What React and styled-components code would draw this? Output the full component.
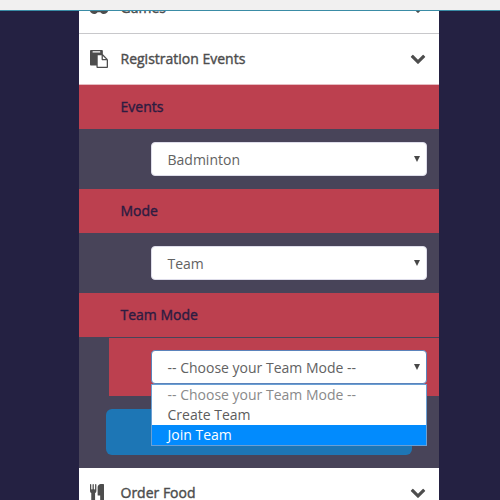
import React from "react";
import styled, { createGlobalStyle } from "styled-components";

const GlobalStyle = createGlobalStyle`
  * { box-sizing: border-box; }
  body {
    margin: 0;
    background: #242142;
    font-family: "Open Sans", "Noto Sans", sans-serif;
    font-size: 14px;
  }
`;

const Page = styled.div`
  height: 500px;
  overflow: hidden;
  display: flex;
  flex-direction: column;
`;

const BrowserEdge = styled.div`
  flex: none;
  height: 11px;
  background: #f1f0f0;
  border-bottom: 1px solid #3a8ca6;
`;

const Accordion = styled.main`
  flex: 1;
  min-height: 0;
  width: 360px;
  margin-left: 79px;
  background: #484459;
  overflow: hidden;
`;

const MenuRow = styled.div`
  display: flex;
  align-items: center;
  height: 51px;
  margin-top: ${(p) => p.$offset || 0}px;
  padding: 0 13px 0 10px;
  background: #fff;
  color: #4d4d4d;
  border-bottom: 1px solid ${(p) => (p.$open ? "#e6bcc2" : "#c8c8cb")};
`;

const MenuLabel = styled.span`
  flex: 1;
  margin-left: 11.5px;
  line-height: 20px;
  white-space: nowrap;
  -webkit-text-stroke: 0.4px currentColor;
`;

const Glyph = styled.svg`
  flex: none;
  display: block;
  width: ${(p) => p.$width}px;
  height: ${(p) => p.$height}px;
  margin-left: ${(p) => p.$left || 0}px;
  margin-right: ${(p) => p.$right || 0}px;
  margin-bottom: ${(p) => p.$lift || 0}px;
  fill: currentColor;
`;

const SectionTitle = styled.div`
  height: 44px;
  padding-left: 41.5px;
  background: #bc404f;
  color: #2d1c41;
  line-height: 44px;
  -webkit-text-stroke: 0.4px currentColor;
`;

const Field = styled.div`
  height: 60px;
  padding: 13px 12px 0 72px;
`;

const ActiveField = styled.div`
  height: 58px;
  margin: 1px 0 0 30px;
  padding: 12px 12px 0 42px;
  background: #bc404f;
`;

const SelectBox = styled.div`
  position: relative;
  display: flex;
  align-items: center;
  justify-content: space-between;
  height: 34px;
  padding: 0 6px 0 15.5px;
  border: 1px solid ${(p) => (p.$focus ? "#5b83bb" : "#deddea")};
  border-radius: 4px;
  background: #fff;
  color: #626262;
  white-space: nowrap;
`;

const Arrow = styled.svg`
  width: 6px;
  height: 6px;
  fill: #484848;
`;

const Options = styled.div`
  position: absolute;
  z-index: 2;
  top: 33px;
  left: -1px;
  right: -1px;
  height: 62px;
  border: 1px solid #6a9fd4;
  background: #fff;
`;

const Option = styled.div`
  height: 20px;
  padding-left: 15.5px;
  line-height: 20px;
  background: ${(p) => (p.$active ? "#028bfd" : "#fff")};
  color: ${(p) => (p.$active ? "#fff" : p.$muted ? "#8a8a8a" : "#5c5c5c")};
`;

const ButtonArea = styled.div`
  height: 72px;
  padding: 13px 27px 0;
`;

const SubmitButton = styled.div`
  height: 46px;
  border-radius: 6px;
  background: #1d76b5;
`;

const Chevron = () => (
  <Glyph viewBox="0 0 1792 1792" $width={16} $height={16} $lift={2}>
    <path d="M1683 808l-742 741q-19 19-45 19t-45-19l-742-741q-19-19-19-45.500t19-45.500l166-165q19-19 45-19t45 19l531 531 531-531q19-19 45-19t45 19l166 165q19 19 19 45.500t-19 45.500z" />
  </Glyph>
);

const GamepadIcon = () => (
  <Glyph viewBox="0 0 20 18" $width={20} $height={18}>
    <path d="M6 4h8a5.500 5.500 0 0 1 5.500 5.500A5 5 0 0 1 15 15c-1.600 0-2.800-.7-3.600-1.800H8.600C7.800 14.300 6.600 15 5 15A5 5 0 0 1 .5 9.500 5.500 5.500 0 0 1 6 4z" />
  </Glyph>
);

const PasteIcon = () => (
  <Glyph viewBox="0 0 1792 1792" $width={18} $height={18} $left={1} $right={1}>
    <path d="M768 1664h896v-640h-416q-40 0-68-28t-28-68v-416h-384v1152zm256-1440v-64q0-13-9.500-22.500t-22.500-9.500h-704q-13 0-22.500 9.500t-9.500 22.500v64q0 13 9.500 22.500t22.500 9.500h704q13 0 22.500-9.500t9.500-22.500zm256 672h299l-299-299v299zm512 128v672q0 40-28 68t-68 28h-960q-40 0-68-28t-28-68v-160h-544q-40 0-68-28t-28-68v-1344q0-40 28-68t68-28h1088q40 0 68 28t28 68v328q21 13 36 28l408 408q28 28 48 76t20 88z" />
  </Glyph>
);

const CutleryIcon = () => (
  <Glyph viewBox="192 0 1408 1792" $width={14} $height={18} $left={1} $right={5}>
    <path d="M832 64v640q0 61-35.500 111t-92.500 70v779q0 52-38 90t-90 38h-128q-52 0-90-38t-38-90v-779q-57-20-92.500-70t-35.500-111v-640q0-26 19-45t45-19 45 19 19 45v416q0 26 19 45t45 19 45-19 19-45v-416q0-26 19-45t45-19 45 19 19 45v416q0 26 19 45t45 19 45-19 19-45v-416q0-26 19-45t45-19 45 19 19 45zm768 0v1600q0 52-38 90t-90 38h-128q-52 0-90-38t-38-90v-512h-224q-13 0-22.500-9.500t-9.500-22.500v-800q0-132 94-226t226-94h256q26 0 45 19t19 45z" />
  </Glyph>
);

function Select({ value, focus, children }) {
  return (
    <SelectBox $focus={focus}>
      <span>{value}</span>
      <Arrow viewBox="0 0 6 6">
        <path d="M0 0h6L3 6z" />
      </Arrow>
      {children}
    </SelectBox>
  );
}

export default function App() {
  return (
    <>
      <GlobalStyle />
      <Page>
        <BrowserEdge />
        <Accordion>
          <MenuRow $offset={-28}>
            <GamepadIcon />
            <MenuLabel>Games</MenuLabel>
            <Chevron />
          </MenuRow>
          <MenuRow $open>
            <PasteIcon />
            <MenuLabel>Registration Events</MenuLabel>
            <Chevron />
          </MenuRow>
          <SectionTitle>Events</SectionTitle>
          <Field>
            <Select value="Badminton" />
          </Field>
          <SectionTitle>Mode</SectionTitle>
          <Field>
            <Select value="Team" />
          </Field>
          <SectionTitle>Team Mode</SectionTitle>
          <ActiveField>
            <Select value="-- Choose your Team Mode --" focus>
              <Options>
                <Option $muted>-- Choose your Team Mode --</Option>
                <Option>Create Team</Option>
                <Option $active>Join Team</Option>
              </Options>
            </Select>
          </ActiveField>
          <ButtonArea>
            <SubmitButton />
          </ButtonArea>
          <MenuRow>
            <CutleryIcon />
            <MenuLabel>Order Food</MenuLabel>
            <Chevron />
          </MenuRow>
        </Accordion>
      </Page>
    </>
  );
}
